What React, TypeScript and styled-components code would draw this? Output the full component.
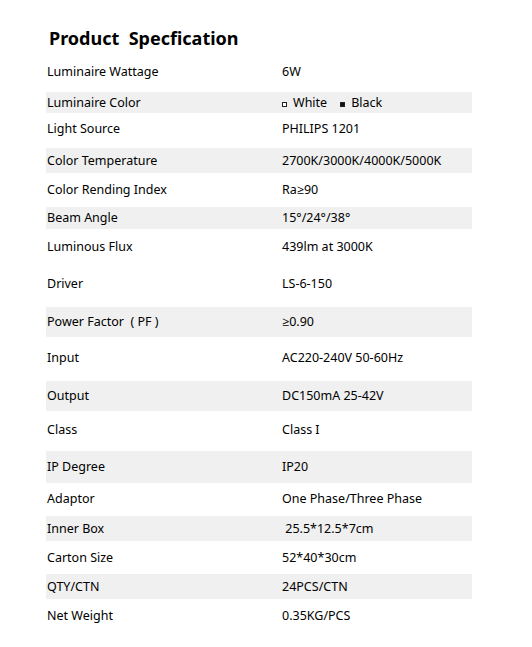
import React from "react";
import styled, {createGlobalStyle} from "styled-components";

const GlobalStyle = createGlobalStyle`
  body {
    margin: 0;
    background: #ffffff;
    font-family: "Noto Sans", "Open Sans", sans-serif;
    color: #000000;
  }
`;

const Page = styled.div`
  padding: 25px 0 0 46px;
  width: 426px;
`;

const Title = styled.h1`
  margin: 0 0 0 3px;
  height: 27px;
  font-size: 18px;
  font-weight: 700;
  line-height: 26px;
  white-space: pre;
  color: #000000;
`;

const Table = styled.div`
  display: flex;
  flex-direction: column;
`;

const Row = styled.div<{ $h: number; $shaded: boolean; $lift: number }>`
  display: grid;
  grid-template-columns: 235px 1fr;
  align-items: center;
  box-sizing: border-box;
  height: ${p => p.$h}px;
  padding-bottom: ${p => p.$lift}px;
  background: ${p => (p.$shaded ? "#f0f0f0" : "transparent")};
  font-size: 12.5px;
  line-height: 16px;
`;

const Cell = styled.div`
  padding-left: 1px;
  white-space: pre;
`;

const Swatch = styled.span<{ $filled: boolean }>`
  display: inline-block;
  width: 5px;
  height: 5px;
  box-sizing: border-box;
  border: 1px solid #222222;
  background: ${p => (p.$filled ? "#111111" : "#ffffff")};
  margin-right: 6px;
  vertical-align: 0;
`;

const Gap = styled.span`
  display: inline-block;
  width: 13px;
`;

type Spec = { label: string; value: React.ReactNode; h: number; shaded?: boolean; lift?: number };

const specs: Spec[] = [
    {label: "Luminaire Wattage", value: "6W", h: 40},
    {
        label: "Luminaire Color", h: 21, shaded: true, value: <>
            <Swatch $filled={false}/>White<Gap/><Swatch $filled={true}/>Black
        </>
    },
    {label: "Light Source", value: "PHILIPS 1201", h: 35, lift: 3},
    {label: "Color Temperature", value: "2700K/3000K/4000K/5000K", h: 25, shaded: true},
    {label: "Color Rending Index", value: "Ra≥90", h: 34},
    {label: "Beam Angle", value: "15°/24°/38°", h: 22, shaded: true},
    {label: "Luminous Flux", value: "439lm at 3000K", h: 36},
    {label: "Driver", value: "LS-6-150", h: 42, lift: 5},
    {label: "Power Factor\u00a0\u00a0( PF )", value: "≥0.90", h: 30, shaded: true},
    {label: "Input", value: "AC220-240V 50-60Hz", h: 44, lift: 2},
    {label: "Output", value: "DC150mA 25-42V", h: 30, shaded: true},
    {label: "Class", value: "Class I", h: 40, lift: 2},
    {label: "IP Degree", value: "IP20", h: 32, shaded: true},
    {label: "Adaptor", value: "One Phase/Three Phase", h: 33, lift: 1},
    {label: "Inner Box", value: "\u00a025.5*12.5*7cm", h: 25, shaded: true},
    {label: "Carton Size", value: "52*40*30cm", h: 33},
    {label: "QTY/CTN", value: "24PCS/CTN", h: 25, shaded: true},
    {label: "Net Weight", value: "0.35KG/PCS", h: 34},
];

const App: React.FC = () => {
    return <>
        <GlobalStyle/>
        <Page>
            <Title>{"Product  Specfication"}</Title>
            <Table>
                {specs.map(s => (
                    <Row key={s.label} $h={s.h} $shaded={!!s.shaded} $lift={s.lift ?? 0}>
                        <Cell>{s.label}</Cell>
                        <Cell>{s.value}</Cell>
                    </Row>
                ))}
            </Table>
        </Page>
    </>;
};

export default App;
